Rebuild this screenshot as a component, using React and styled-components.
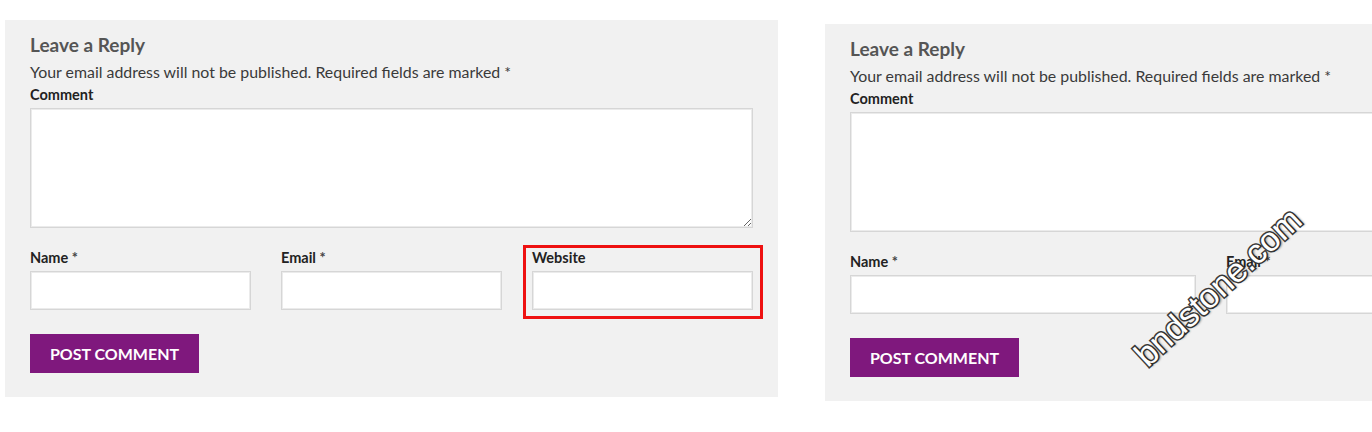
import React from "react";
import styled, { createGlobalStyle } from "styled-components";

const Global = createGlobalStyle`
    body {
        margin: 0;
        background: #ffffff;
        overflow: hidden;
        font-family: Lato, "Open Sans", sans-serif;
    }
`;

const CommentForm = ({ width, offset, marked }) => {
    return (
        <Panel width={width} offset={offset}>
            <Title>Leave a Reply</Title>
            <Notice>Your email address will not be published. Required fields are marked *</Notice>
            <Label>Comment</Label>
            <TextArea />
            <FieldRow>
                <Field>
                    <Label>Name <Req>*</Req></Label>
                    <Input />
                </Field>
                <Field>
                    <Label>Email <Req>*</Req></Label>
                    <Input />
                </Field>
                <Field>
                    <Label>Website</Label>
                    <Input />
                    {marked && <Highlight />}
                </Field>
            </FieldRow>
            <Button>Post Comment</Button>
        </Panel>
    );
};

const App = () => {
    return (
        <Page>
            <Global />
            <CommentForm width={773} offset={0} marked />
            <CommentForm width={1148} offset={4} />
            <Watermark>bndstone.com</Watermark>
        </Page>
    );
};
export default App;

const Page = styled.div`
    position: relative;
    width: 1372px;
    height: 432px;
    overflow: hidden;
    display: flex;
    align-items: flex-start;
    gap: 47px;
    padding: 20px 0 0 5px;
    box-sizing: border-box;
`;

const Panel = styled.div`
    flex: none;
    width: ${(p) => p.width}px;
    margin-top: ${(p) => p.offset}px;
    padding: 13px 25px 24px;
    box-sizing: border-box;
    background: #f1f1f1;
    display: flex;
    flex-direction: column;
`;

const Title = styled.h3`
    margin: 0;
    font-size: 19px;
    line-height: 24px;
    font-weight: 700;
    color: #555555;
`;

const Notice = styled.p`
    margin: 3px 0 0;
    font-size: 15.9px;
    line-height: 23px;
    color: #3a3a3a;
`;

const Label = styled.label`
    display: block;
    font-size: 14.5px;
    line-height: 18px;
    font-weight: 700;
    color: #222222;
    margin: 3px 0 4px;
`;

const Req = styled.span`
    color: #444;
`;

const TextArea = styled.textarea`
    display: block;
    width: 100%;
    height: 120px;
    box-sizing: border-box;
    border: 1px solid #d6d6d6;
    box-shadow: inset 0 0 0 1px #ebebeb;
    background: #fff;
    margin: 0;
    outline: none;
`;

const FieldRow = styled.div`
    display: grid;
    grid-template-columns: repeat(3, 1fr);
    gap: 30px;
    margin-top: 18px;
`;

const Field = styled.div`
    position: relative;
`;

const Input = styled.input`
    display: block;
    width: 100%;
    height: 39px;
    box-sizing: border-box;
    border: 1px solid #d6d6d6;
    box-shadow: inset 0 0 0 1px #ebebeb;
    background: #fff;
    margin: 0;
    outline: none;
`;

// red annotation drawn over the website field
const Highlight = styled.div`
    position: absolute;
    left: -9px;
    top: -1px;
    width: 240px;
    height: 74px;
    box-sizing: border-box;
    border: 3px solid #ee1111;
    pointer-events: none;
`;

const Button = styled.button`
    align-self: flex-start;
    margin-top: 24px;
    height: 39px;
    width: 169px;
    padding: 0;
    border: none;
    background: #7f187d;
    color: #ffffff;
    font-family: Lato, sans-serif;
    font-size: 16px;
    font-weight: 700;
    text-transform: uppercase;
`;

const Watermark = styled.div`
    position: absolute;
    left: 1218px;
    top: 287px;
    transform: translate(-50%, -50%) rotate(-43deg);
    font-family: "Liberation Sans", Arial, sans-serif;
    font-size: 34px;
    color: #ffffff;
    -webkit-text-stroke: 3px #3a3a3a;
    paint-order: stroke fill;
    text-shadow: 2px 2px 2px rgba(0, 0, 0, 0.35);
    white-space: nowrap;
    pointer-events: none;
`;
